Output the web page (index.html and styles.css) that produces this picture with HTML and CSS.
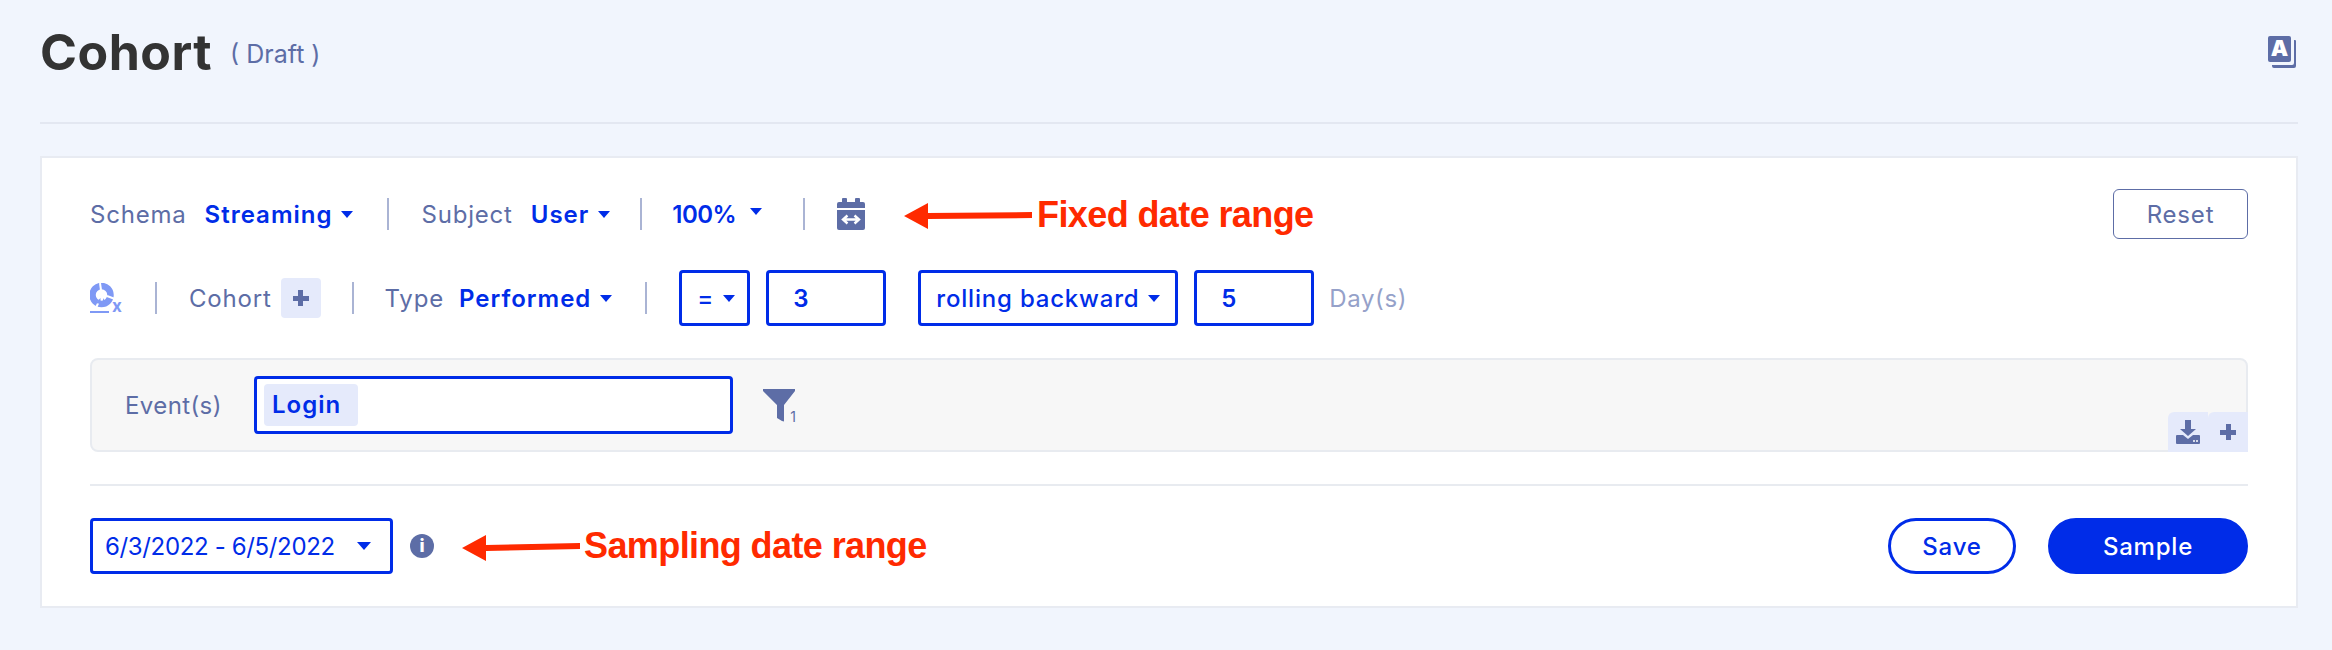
FILE: index.html
```html
<!doctype html>
<html>
<head>
    <meta charset="utf-8">
    <title>Cohort</title>
    <link rel="stylesheet" href="styles.css">
</head>
<body>
<div class="entete">
    <h1 class="titre">Cohort</h1>
    <span class="brouillon">( Draft )</span>
    <svg class="icone-a" width="28" height="32" viewBox="0 0 28 32">
        <path d="M26 4h1a1 1 0 0 1 1 1v25a2 2 0 0 1-2 2H6a2 2 0 0 1-2-2v-1h20a2 2 0 0 0 2-2z" fill="#5d6da6"/>
        <rect width="23" height="26" rx="2" fill="#5d6da6"/>
        <text x="11.5" y="20" class="svg-a">A</text>
    </svg>
</div>

<div class="carte">
    <div class="ligne ligne-haut">
        <span class="label">Schema</span>
        <span class="valeur">Streaming</span><i class="caret"></i>
        <i class="sep s1"></i>
        <span class="label">Subject</span>
        <span class="valeur">User</span><i class="caret"></i>
        <i class="sep s2"></i>
        <span class="valeur cent">100%</span><i class="caret caret-large"></i>
        <i class="sep s3"></i>
        <svg class="calendrier" width="28" height="32" viewBox="0 0 28 32">
            <path d="M6 0h3a1 1 0 0 1 1 1v3h8V1a1 1 0 0 1 1-1h3a1 1 0 0 1 1 1v3h3a2 2 0 0 1 2 2v4H0V6a2 2 0 0 1 2-2h3V1a1 1 0 0 1 1-1z" fill="#5d6da6"/>
            <path d="M0 12h28v18a2 2 0 0 1-2 2H2a2 2 0 0 1-2-2z" fill="#5d6da6"/>
            <path d="M8 21.500h12M10.500 17.500l-4.500 4 4.500 4M17.500 17.500l4.500 4-4.500 4" fill="none" stroke="#fff" stroke-width="2.400"/>
        </svg>
        <button type="button" class="reset">Reset</button>
    </div>

    <div class="ligne ligne-cohorte">
        <svg class="icone-x" width="33" height="44" viewBox="0 0 33 44">
            <circle cx="11.500" cy="12" r="9" fill="none" stroke="#7f99f5" stroke-width="6.500"/>
            <path d="M10 0l1 7M17 13l8 3M9 18l-3 7" stroke="#fff" stroke-width="2"/>
            <path d="M10.500 15v6l-5-1zM13 15l3 5-3 1.500z" fill="#7f99f5"/>
            <rect y="28" width="19" height="2" fill="#7f99f5"/>
            <text x="27" y="29" class="svg-x">x</text>
        </svg>
        <i class="sep s4"></i>
        <span class="label">Cohort</span>
        <span class="plus"><span class="plus-petit"></span></span>
        <i class="sep s5"></i>
        <span class="label label-serre">Type</span>
        <span class="valeur">Performed</span><i class="caret"></i>
        <i class="sep s6"></i>
        <div class="boite boite-egal">=<i class="caret"></i></div>
        <div class="boite boite-nombre">3</div>
        <div class="boite boite-rolling">rolling backward<i class="caret"></i></div>
        <div class="boite boite-nombre boite-cinq">5</div>
        <span class="jours">Day(s)</span>
    </div>

    <div class="evenements">
        <span class="label-event">Event(s)</span>
        <div class="champ"><span class="puce">Login</span></div>
        <svg class="filtre" width="34" height="46" viewBox="0 0 34 46">
            <path d="M0 0h32v2L21 16v16.500L19 32l-5-3V16L0 2z" fill="#5d6da6"/>
            <text x="30" y="33" class="svg-un">1</text>
        </svg>
        <div class="onglets">
            <span class="onglet">
                <svg width="24" height="24" viewBox="0 0 24 24">
                    <path d="M9 0h6v9h5l-8 7-8-7h5z" fill="#5d6da6"/>
                    <path d="M1 15h6l5 4 5-4h6a1 1 0 0 1 1 1v7a1 1 0 0 1-1 1H1a1 1 0 0 1-1-1v-7a1 1 0 0 1 1-1z" fill="#5d6da6"/>
                    <path d="M17 21h2M20 21h2" stroke="#fff" stroke-width="1.500"/>
                </svg>
            </span>
            <span class="onglet"><span class="plus-petit"></span></span>
        </div>
    </div>

    <div class="ligne ligne-bas">
        <div class="boite boite-date">6/3/2022 - 6/5/2022<i class="caret caret-date"></i></div>
        <svg class="info" width="24" height="24" viewBox="0 0 24 24">
            <circle cx="12" cy="12" r="12" fill="#5d6da6"/>
            <text x="12" y="18" class="svg-i">i</text>
        </svg>
        <button type="button" class="bouton bouton-save">Save</button>
        <button type="button" class="bouton bouton-sample">Sample</button>
    </div>
</div>

<!-- annotations rouges par dessus la page -->
<svg class="fleche fleche-fixed" width="128" height="26" viewBox="0 0 128 26">
    <path d="M0 13L24 0v10l104-1v6L24 16v10z" fill="#ff2a00"/>
</svg>
<span class="note note-fixed">Fixed date range</span>
<svg class="fleche fleche-sampling" width="118" height="26" viewBox="0 0 118 26">
    <path d="M0 13L24 0v10l94-2v6l-94 2v10z" fill="#ff2a00"/>
</svg>
<span class="note note-sampling">Sampling date range</span>
</body>
</html>
```

FILE: styles.css
```css
* {
    box-sizing: border-box;
}

body {
    position: relative;
    margin: 0;
    height: 650px;
    padding: 0 34px 0 40px;
    background-color: #f1f5fd;
    font-family: "Inter", "Liberation Sans", sans-serif;
    overflow: hidden;
}

.entete {
    display: flex;
    align-items: center;
    height: 124px;
    padding-bottom: 18px;
    border-bottom: 2px solid #e3e7f1;
}

.titre {
    margin: 0;
    font-size: 50px;
    font-weight: 700;
    letter-spacing: 0.5px;
    color: #333333;
}

.brouillon {
    margin-left: 18px;
    margin-top: 3px;
    font-size: 25px;
    color: #5d6da6;
}

.icone-a {
    margin-left: auto;
    margin-right: 2px;
}

.svg-a {
    font-size: 22px;
    font-weight: 900;
    fill: #ffffff;
    text-anchor: middle;
}

.carte {
    margin-top: 32px;
    height: 452px;
    padding: 31px 48px 0 48px;
    background-color: #ffffff;
    border: 2px solid #e8ebf2;
}

.ligne {
    display: flex;
    align-items: center;
}

.ligne-haut {
    height: 50px;
}

.ligne-cohorte {
    height: 56px;
    margin-top: 31px;
}

.label {
    font-size: 24px;
    letter-spacing: 0.8px;
    color: #5d6da6;
    margin-right: 18px;
}

.label-serre {
    margin-right: 15px;
}

.valeur {
    font-size: 24px;
    font-weight: 600;
    letter-spacing: 1px;
    color: #002ce8;
}

.cent {
    letter-spacing: -0.5px;
}

.caret {
    display: inline-block;
    margin-left: 9px;
    border-left: 6px solid transparent;
    border-right: 6px solid transparent;
    border-top: 7px solid #002ce8;
}

.caret-large {
    margin-left: 14px;
    margin-top: -5px;
}

.sep {
    display: block;
    width: 2px;
    height: 32px;
    background-color: #aab4d4;
}

.s1 {
    margin: 0 32px 0 34px;
}

.s2 {
    margin: 0 30px 0 30px;
}

.s3 {
    margin: 0 32px 0 41px;
}

.s4 {
    margin: 0 32px 0 32px;
}

.s5 {
    margin: 0 31px 0 31px;
}

.s6 {
    margin: 0 32px 0 33px;
}

.icone-x {
    margin-top: 14px;
}

.reset {
    margin-left: auto;
    width: 135px;
    height: 50px;
    background-color: #ffffff;
    border: 1px solid #5d6da6;
    border-radius: 6px;
    font-family: inherit;
    font-size: 24px;
    letter-spacing: 0.8px;
    color: #5d6da6;
}

.plus {
    display: flex;
    align-items: center;
    justify-content: center;
    width: 40px;
    height: 40px;
    margin: 0 0 0 -9px;
    background-color: #e5eafb;
    border-radius: 4px;
}

.boite {
    display: flex;
    align-items: center;
    height: 56px;
    padding-left: 15px;
    border: 3px solid #002ce8;
    border-radius: 4px;
    background-color: #ffffff;
    font-size: 24px;
    font-weight: 500;
    letter-spacing: 0.8px;
    color: #002ce8;
}

.boite-egal {
    width: 71px;
}

.boite-nombre {
    width: 120px;
    margin-left: 16px;
    padding-left: 24px;
    font-weight: 600;
}

.boite-rolling {
    width: 260px;
    margin-left: 32px;
}

.boite-cinq {
    margin-left: 16px;
}

.jours {
    margin-left: 15px;
    font-size: 24px;
    letter-spacing: 0.6px;
    color: #95a1c9;
}

.evenements {
    position: relative;
    display: flex;
    align-items: center;
    height: 94px;
    margin-top: 32px;
    padding-left: 33px;
    background-color: #f7f7f7;
    border: 2px solid #e8ebf0;
    border-radius: 8px;
}

.label-event {
    width: 129px;
    font-size: 24px;
    letter-spacing: 0.4px;
    color: #5d6da6;
}

.champ {
    display: flex;
    align-items: center;
    width: 479px;
    height: 58px;
    padding-left: 7px;
    background-color: #ffffff;
    border: 3px solid #002ce8;
    border-radius: 4px;
}

.puce {
    display: block;
    width: 94px;
    height: 42px;
    padding-left: 8px;
    background-color: #e5eafb;
    border-radius: 4px;
    font-size: 24px;
    font-weight: 600;
    letter-spacing: 1px;
    line-height: 42px;
    color: #002ce8;
}

.filtre {
    margin-left: 30px;
    margin-top: 14px;
}

.svg-un {
    font-size: 14px;
    fill: #5d6da6;
    text-anchor: middle;
}

.svg-x {
    font-size: 17px;
    font-weight: 700;
    fill: #7f99f5;
    text-anchor: middle;
}

.onglets {
    position: absolute;
    right: -2px;
    bottom: -2px;
    display: flex;
}

.onglet {
    display: flex;
    align-items: center;
    justify-content: center;
    width: 40px;
    height: 40px;
    background-color: #e5eafb;
    border-top-left-radius: 6px;
}

.plus-petit {
    display: block;
    width: 16px;
    height: 16px;
    background:
        linear-gradient(#5d6da6, #5d6da6) center / 16px 5px no-repeat,
        linear-gradient(#5d6da6, #5d6da6) center / 5px 16px no-repeat;
}

.ligne-bas {
    height: 90px;
    margin-top: 32px;
    padding-top: 32px;
    border-top: 2px solid #e8ebf0;
}

.boite-date {
    width: 303px;
    padding-left: 12px;
    font-weight: 400;
    letter-spacing: -0.35px;
}

.caret-date {
    margin-left: 22px;
    border-left-width: 7px;
    border-right-width: 7px;
    border-top-width: 8px;
}

.info {
    margin-left: 17px;
}

.svg-i {
    font-size: 18px;
    font-weight: 800;
    fill: #ffffff;
    text-anchor: middle;
}

.bouton {
    height: 56px;
    border: 3px solid #002ce8;
    border-radius: 28px;
    font-family: inherit;
    font-size: 24px;
    font-weight: 500;
    letter-spacing: 0.8px;
}

.bouton-save {
    width: 128px;
    margin-left: auto;
    background-color: #ffffff;
    color: #002ce8;
}

.bouton-sample {
    width: 200px;
    margin-left: 32px;
    background-color: #002ce8;
    color: #ffffff;
}

.fleche {
    position: absolute;
}

.fleche-fixed {
    left: 904px;
    top: 203px;
}

.fleche-sampling {
    left: 462px;
    top: 535px;
}

.note {
    position: absolute;
    font-family: "Liberation Sans", sans-serif;
    font-size: 36px;
    font-weight: 700;
    letter-spacing: -0.6px;
    color: #ff2a00;
    white-space: nowrap;
}

.note-fixed {
    left: 1037px;
    top: 194px;
}

.note-sampling {
    left: 584px;
    top: 525px;
}
```
